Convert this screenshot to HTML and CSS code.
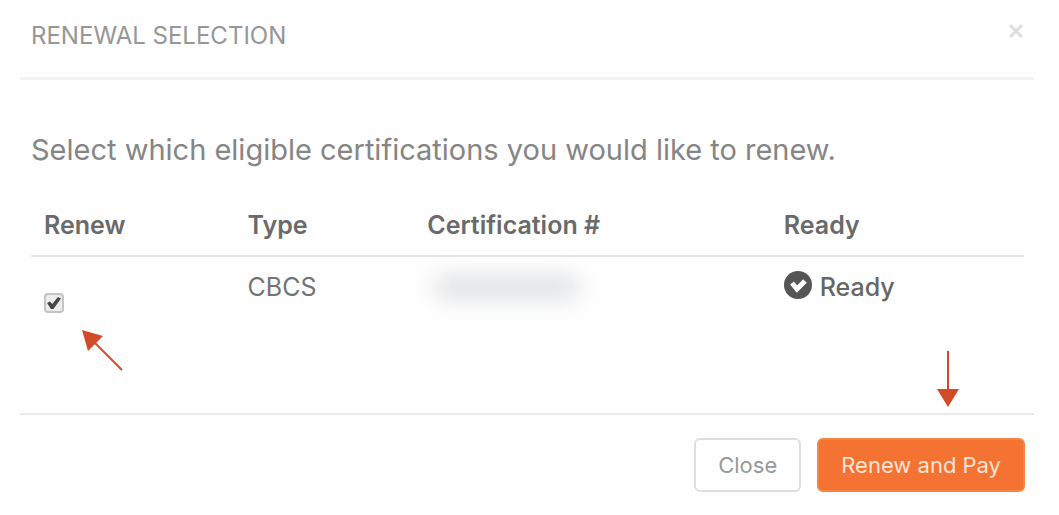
FILE: index.html
```html
<!DOCTYPE html>
<html lang="en">
<head>
<meta charset="utf-8">
<title>Renewal Selection</title>
<link rel="stylesheet" href="styles.css">
</head>
<body>
<main class="dialog" role="dialog" aria-labelledby="dialog-title">
  <header class="dialog-header">
    <h1 class="dialog-title" id="dialog-title">RENEWAL SELECTION</h1>
    <button class="dismiss" type="button" aria-label="Dismiss">
      <svg viewBox="0 0 14 14" width="14" height="14" aria-hidden="true"><path d="M1 1 13 13M13 1 1 13"/></svg>
    </button>
  </header>
  <section class="dialog-body">
    <p class="intro">Select which eligible certifications you would like to renew.</p>
    <table class="certs">
      <thead>
        <tr>
          <th class="col-renew" id="renew-label">Renew</th>
          <th class="col-type">Type</th>
          <th class="col-number">Certification #</th>
          <th class="col-ready">Ready</th>
        </tr>
      </thead>
      <tbody>
        <tr>
          <td class="pick-cell">
            <input class="pick" type="checkbox" checked aria-labelledby="renew-label">
            <svg class="arrow arrow-pick" viewBox="0 0 42 42" width="42" height="42" aria-hidden="true"><path class="shaft" d="M12 12 40 40"/><path class="head" d="M0 0 21 6 6 21z"/></svg>
          </td>
          <td>CBCS</td>
          <td><span class="redacted"></span></td>
          <td>
            <span class="status">
              <svg class="status-icon" viewBox="0 0 28 28" width="28" height="28" aria-hidden="true"><circle cx="14" cy="14" r="14"/><path d="M8 12 13 18 21 10"/></svg>
              Ready
            </span>
          </td>
        </tr>
      </tbody>
    </table>
  </section>
  <footer class="dialog-footer">
    <button class="btn btn-close" type="button">Close</button>
    <button class="btn btn-pay" type="button">Renew and Pay</button>
    <svg class="arrow arrow-pay" viewBox="0 0 22 56" width="22" height="56" aria-hidden="true"><path class="shaft" d="M11 0V40"/><path class="head" d="M0 38H22L11 56z"/></svg>
  </footer>
</main>
</body>
</html>
```
FILE: styles.css
```css
* {
  box-sizing: border-box;
}

body {
  margin: 0;
  background: #fefefe;
  color: #737373;
  font-family: Inter, "Liberation Sans", sans-serif;
  font-size: 25px;
  line-height: 32px;
}

button {
  font: inherit;
  cursor: pointer;
}

.dialog {
  margin: 0 25px 0 20px;
}

.dialog-header {
  display: flex;
  justify-content: space-between;
  align-items: flex-start;
  padding: 20px 11px 25px;
  border-bottom: 3px solid #f2f4f4;
}

.dialog-title {
  margin: 0;
  color: #969696;
  font-size: 24px;
  font-weight: 400;
  line-height: 32px;
}

.dismiss {
  display: flex;
  padding: 4px 0;
  border: 0;
  background: none;
}

.dismiss path {
  fill: none;
  stroke: #dcdfdf;
  stroke-width: 3;
}

.dialog-body {
  padding: 54px 10px 0 11px;
}

.intro {
  margin: 0 0 28px;
  color: #858585;
  font-size: 29px;
}

.certs {
  width: 100%;
  table-layout: fixed;
  border-collapse: collapse;
  text-align: left;
}

.certs th {
  padding: 15px 13px 14px;
  border-bottom: 2px solid #e4e5e9;
  color: #6a6a6a;
  font-weight: 600;
}

.certs td {
  height: 157px;
  padding: 14px 13px;
  vertical-align: top;
}

.col-renew {
  width: 20.5%;
}

.col-type {
  width: 18.1%;
}

.col-number {
  width: 35.9%;
}

.pick-cell {
  position: relative;
}

.pick {
  appearance: none;
  display: grid;
  place-items: center;
  width: 20px;
  height: 20px;
  margin: 22px 0 0;
  border: 2px solid #c4c4c4;
  border-radius: 4px;
  background: #ededed;
}

.pick::after {
  content: "";
  width: 14px;
  height: 12px;
  background: #484848;
  clip-path: polygon(0 50%, 20% 38%, 38% 58%, 78% 0, 100% 12%, 46% 100%, 28% 100%);
}

.redacted {
  display: block;
  width: 144px;
  height: 24px;
  margin: 4px 0 0 8px;
  border-radius: 12px;
  background: #e0e1e3;
  filter: blur(11px);
}

.status {
  display: flex;
  gap: 8px;
  color: #666;
  font-weight: 500;
}

.status-icon {
  fill: #555;
}

.status-icon path {
  fill: none;
  stroke: #fefefe;
  stroke-width: 5;
}

.dialog-footer {
  position: relative;
  display: flex;
  justify-content: flex-end;
  gap: 16px;
  padding: 23px 9px 23px 0;
  border-top: 2px solid #e8e9e9;
}

.btn {
  padding: 9px 22px;
  border: 2px solid #dde0e0;
  border-radius: 6px;
  background: #fefefe;
  color: #999;
  font-size: 22px;
}

.btn-pay {
  border-color: #f5853f;
  background: #f47333;
  color: #fde3d5;
}

.arrow {
  position: absolute;
}

.arrow .shaft {
  fill: none;
  stroke: #d24b28;
  stroke-width: 2;
}

.arrow .head {
  fill: #d24b28;
}

.arrow-pick {
  top: 73px;
  left: 51px;
}

.arrow-pay {
  right: 75px;
  bottom: 100%;
  margin-bottom: 8px;
}
```
